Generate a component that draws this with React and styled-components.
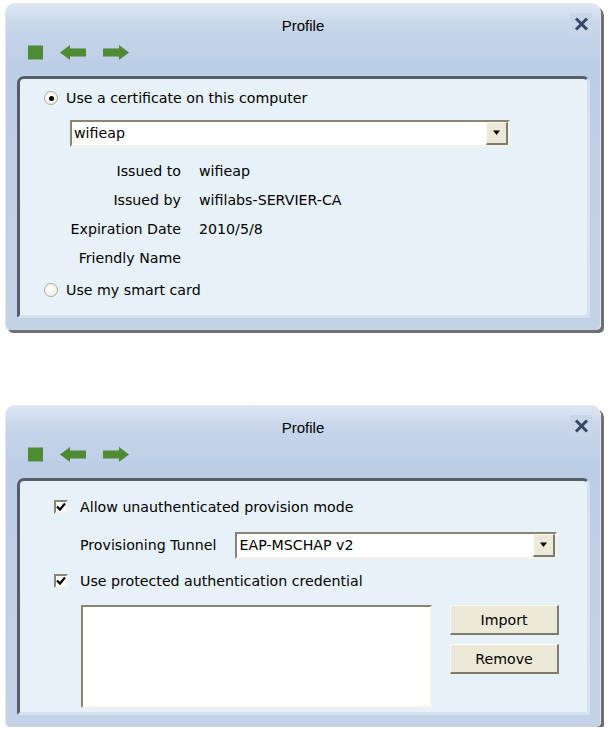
import React from "react";
import styled, { createGlobalStyle, css } from "styled-components";

const Global = createGlobalStyle`
  html, body { margin: 0; padding: 0; background: #ffffff; }
  body { font-family: "DejaVu Sans", Tahoma, sans-serif; color: #000; }
`;

const Page = styled.div`
  width: 610px;
  padding: 3px 0 0 5px;
  box-sizing: border-box;
  display: flex;
  flex-direction: column;
  gap: 75px;
`;

const Frame = styled.div`
  width: 596px;
  box-sizing: border-box;
  border-radius: 10px 10px 5px 5px;
  border: 1px solid #dfe5ec;
  border-bottom-color: #c9d3e0;
  background: linear-gradient(180deg, #dde6f2 0px, #c6d5ea 24px, #bccee6 60px, #c3d2e7 100%);
  box-shadow: 3px 3px 0 #6f6f6f;
  display: flex;
  flex-direction: column;
`;

const TitleBar = styled.div`
  height: 34px;
  display: flex;
  align-items: center;
  justify-content: center;
  position: relative;
  font-family: "Liberation Sans", Arial, sans-serif;
  font-size: 15px;
  padding-top: 8px;
  box-sizing: border-box;
`;

const Close = styled.div`
  position: absolute;
  right: 8px;
  top: 9px;
  width: 22px;
  height: 22px;
  display: flex;
  align-items: center;
  justify-content: center;
  background: #c9d6e9;
`;

const Toolbar = styled.div`
  height: 38px;
  box-sizing: border-box;
  display: flex;
  align-items: flex-start;
  padding: 7px 0 0 22px;
  gap: 17px;
`;

const Panel = styled.div`
  margin: 0 10px 11px 11px;
  border-radius: 7px 7px 2px 2px;
  border-style: solid;
  border-width: 3px;
  border-color: #575e69 #d6e1ef #d6e1ef #575e69;
  background: #e7f1f8;
  height: ${(p) => p.$h}px;
  box-sizing: border-box;
  font-size: 14.2px;
`;

const Content = styled.div`
  display: flex;
  flex-direction: column;
  padding: ${(p) => p.$pad};
`;

const Row = styled.div`
  display: flex;
  align-items: center;
  height: ${(p) => p.$h || 29}px;
  margin-left: ${(p) => p.$ml || 0}px;
  gap: ${(p) => p.$gap || 8}px;
`;

const Radio = styled.span`
  width: 14px;
  height: 14px;
  border-radius: 50%;
  box-sizing: border-box;
  border: 1px solid #b0aa98;
  background: radial-gradient(circle at 40% 40%, #ffffff 0%, #f2f1ea 60%, #dcd8c8 100%);
  display: inline-flex;
  align-items: center;
  justify-content: center;
  flex: none;
  ${(p) =>
    p.$on &&
    css`
      &::after {
        content: "";
        width: 5px;
        height: 5px;
        border-radius: 50%;
        background: #000;
      }
    `}
`;

const Check = styled.span`
  width: 14px;
  height: 14px;
  box-sizing: border-box;
  border-style: solid;
  border-width: 2px;
  border-color: #8a8474 #f4f1e8 #f4f1e8 #8a8474;
  background: #fff;
  display: inline-flex;
  align-items: center;
  justify-content: center;
  flex: none;
`;

const Sunken = css`
  box-sizing: border-box;
  border-style: solid;
  border-width: 2px;
  border-color: #8a8474 #f5f2ea #f5f2ea #8a8474;
  background: #fff;
`;

const Combo = styled.div`
  ${Sunken}
  width: ${(p) => p.$w}px;
  height: ${(p) => p.$h}px;
  display: flex;
  align-items: center;
  padding-left: 2px;
  font-size: 14.2px;
`;

const ComboText = styled.span`
  flex: 1;
`;

const DropBtn = styled.span`
  width: 22px;
  height: 100%;
  box-sizing: border-box;
  background: #ece9d8;
  border-style: solid;
  border-width: 1px 2px 2px 1px;
  border-color: #fbfaf4 #7d7a6e #7d7a6e #fbfaf4;
  display: flex;
  align-items: center;
  justify-content: center;
`;

const InfoGrid = styled.div`
  display: grid;
  grid-template-columns: 137px auto;
  column-gap: 18px;
  grid-auto-rows: 29px;
  align-items: center;
  margin-top: 3px;
`;

const Label = styled.span`
  text-align: right;
`;

const ListBox = styled.div`
  ${Sunken}
  width: 351px;
  height: 103px;
`;

const Buttons = styled.div`
  display: flex;
  flex-direction: column;
  gap: 9px;
`;

const Button = styled.div`
  width: 109px;
  height: 30px;
  box-sizing: border-box;
  background: #ece9d8;
  border-style: solid;
  border-width: 1px 2px 2px 1px;
  border-color: #fbfaf4 #7d7a6e #7d7a6e #fbfaf4;
  display: flex;
  align-items: center;
  justify-content: center;
  font-size: 14.2px;
`;

const CredRow = styled.div`
  display: flex;
  gap: 18px;
  margin-left: 61px;
  margin-top: 11px;
`;

const Arrow = () => (
  <svg width="10" height="8" viewBox="0 0 10 8">
    <polygon points="1,1.5 8,1.5 4.5,6" fill="#000" />
  </svg>
);

const Tick = () => (
  <svg width="10" height="10" viewBox="0 0 10 10">
    <path d="M1 4.5 L4 7.5 L9 1.5" stroke="#000" strokeWidth="2.2" fill="none" />
  </svg>
);

const ToolIcons = () => (
  <>
    <svg width="15" height="15" viewBox="0 0 15 15">
      <rect x="0" y="0.5" width="15" height="14" fill="#4f8a35" />
    </svg>
    <svg width="26" height="15" viewBox="0 0 26 15">
      <polygon points="0,7.5 10,0 10,3.5 26,3.5 26,11.5 10,11.5 10,15" fill="#4f8a35" />
    </svg>
    <svg width="26" height="15" viewBox="0 0 26 15">
      <polygon points="26,7.5 16,0 16,3.5 0,3.5 0,11.5 16,11.5 16,15" fill="#4f8a35" />
    </svg>
  </>
);

const CloseIcon = () => (
  <svg width="15" height="14" viewBox="0 0 15 14">
    <path d="M2 1.5 L13 12.5 M13 1.5 L2 12.5" stroke="#3b4564" strokeWidth="3" />
  </svg>
);

const Window = ({ panelH, children }) => (
  <Frame>
    <TitleBar>
      Profile
      <Close>
        <CloseIcon />
      </Close>
    </TitleBar>
    <Toolbar>
      <ToolIcons />
    </Toolbar>
    <Panel $h={panelH}>{children}</Panel>
  </Frame>
);

export default function App() {
  return (
    <>
      <Global />
      <Page>
        <Window panelH={242}>
          <Content $pad="4px 0 0 24px">
            <Row $h={30}>
              <Radio $on />
              <span>Use a certificate on this computer</span>
            </Row>
            <Row $h={40} $ml={26}>
              <Combo $w={440} $h={27}>
                <ComboText>wifieap</ComboText>
                <DropBtn>
                  <Arrow />
                </DropBtn>
              </Combo>
            </Row>
            <InfoGrid>
              <Label>Issued to</Label>
              <span>wifieap</span>
              <Label>Issued by</Label>
              <span>wifilabs-SERVIER-CA</span>
              <Label>Expiration Date</Label>
              <span>2010/5/8</span>
              <Label>Friendly Name</Label>
              <span></span>
            </InfoGrid>
            <Row $h={36}>
              <Radio />
              <span>Use my smart card</span>
            </Row>
          </Content>
        </Window>
        <Window panelH={237}>
          <Content $pad="10px 0 0 34px">
            <Row $h={31} $gap={12}>
              <Check>
                <Tick />
              </Check>
              <span>Allow unauthenticated provision mode</span>
            </Row>
            <Row $h={46} $ml={26} $gap={19}>
              <span>Provisioning Tunnel</span>
              <Combo $w={322} $h={27}>
                <ComboText>EAP-MSCHAP v2</ComboText>
                <DropBtn>
                  <Arrow />
                </DropBtn>
              </Combo>
            </Row>
            <Row $h={26} $gap={12}>
              <Check>
                <Tick />
              </Check>
              <span>Use protected authentication credential</span>
            </Row>
          </Content>
          <CredRow>
            <ListBox />
            <Buttons>
              <Button>Import</Button>
              <Button>Remove</Button>
            </Buttons>
          </CredRow>
        </Window>
      </Page>
    </>
  );
}
